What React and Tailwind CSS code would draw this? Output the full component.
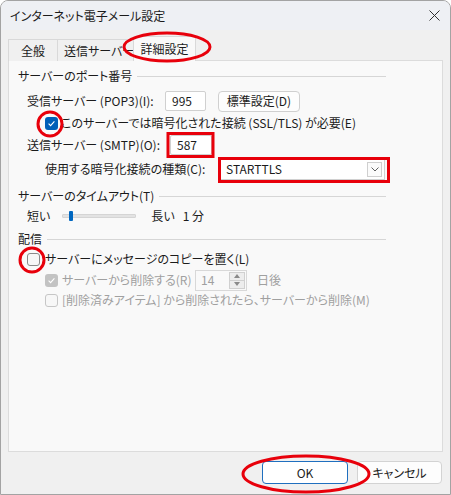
import React from "react";

function Check({ checked, disabled }) {
  if (checked) {
    return (
      <span
        className={`w-[13px] h-[13px] rounded-[3px] flex items-center justify-center shrink-0 ${
          disabled ? "bg-[#c3c3c3]" : "bg-[#005fb8]"
        }`}
      >
        <svg width="9" height="9" viewBox="0 0 9 9">
          <path d="M1.6 4.7 L3.6 6.6 L7.4 2.4" fill="none" stroke="white" strokeWidth="1.1" />
        </svg>
      </span>
    );
  }
  return (
    <span
      className={`w-[13px] h-[13px] rounded-[3px] border shrink-0 bg-[#f7f7f7] ${
        disabled ? "border-[#c6c6c6]" : "border-[#8a8a8a]"
      }`}
    />
  );
}

function Group({ title, className }) {
  return (
    <div className={`flex items-center h-[18px] ${className}`}>
      <span>{title}</span>
      <span className="flex-1 h-px bg-[#d6d6d6] ml-[5px]" />
    </div>
  );
}

export default function App() {
  return (
    <div className="relative w-[451px] h-[495px] bg-[#f0f0f0] border border-[#a3a3a3] rounded-t-[8px] overflow-hidden text-[12px] leading-[18px] text-[#1b1b1b] font-['Noto_Sans_CJK_JP','Noto_Sans',sans-serif] [font-feature-settings:'palt']">
      {/* title bar */}
      <div className="h-[29px] flex items-center justify-between pl-[9px] pr-[9px] bg-[#eef0f4]">
        <span>インターネット電子メール設定</span>
        <svg width="11" height="11" viewBox="0 0 11 11" className="mr-[1px]">
          <path d="M0.5 0.5 L10.5 10.5 M10.5 0.5 L0.5 10.5" stroke="#303030" strokeWidth="1" />
        </svg>
      </div>

      {/* tabs */}
      <div className="flex items-end h-[31px] pl-[7px] relative z-10 -mb-px whitespace-nowrap">
        <div className="w-[49px] h-[22px] flex items-center justify-center border-l border-t border-[#d9d9d9] bg-[#f0f0f0]">
          全般
        </div>
        <div className="w-[76px] h-[22px] flex items-center pl-[6px] border-l border-t border-[#d9d9d9] bg-[#f0f0f0] overflow-hidden">
          送信サーバー
        </div>
        <div className="w-[63px] h-[25px] flex items-center justify-center border-l border-t border-r border-[#d9d9d9] bg-[#f9f9f9] rounded-t-[2px]">
          詳細設定
        </div>
      </div>

      {/* panel */}
      <div className="mx-[7px] h-[392px] bg-[#f9f9f9] border border-[#dcdcdc] whitespace-nowrap">
        <div className="pl-[9px] w-[377px]">
          <Group title="サーバーのポート番号" className="mt-[6px]" />

          <div className="flex items-center h-[22px] mt-[5px] pl-[9px]">
            <span className="w-[138px]">受信サーバー (POP3)(I):</span>
            <div className="w-[41px] h-[20px] bg-white border border-[#d0d0d0] rounded-[2px] flex items-center pl-[6px]">
              995
            </div>
            <div className="ml-[12px] w-[82px] h-[21px] bg-[#fdfdfd] border border-[#d0d0d0] rounded-[4px] flex items-center justify-center">
              標準設定(D)
            </div>
          </div>

          <div className="flex items-center h-[18px] mt-[2px] pl-[27px] gap-[3px]">
            <Check checked />
            <span>このサーバーでは暗号化された接続 (SSL/TLS) が必要(E)</span>
          </div>

          <div className="flex items-center h-[22px] mt-[2px] pl-[9px]">
            <span className="w-[143px]">送信サーバー (SMTP)(O):</span>
            <div className="w-[42px] h-[20px] bg-white border border-[#d0d0d0] rounded-[2px] flex items-center pl-[6px]">
              587
            </div>
          </div>

          <div className="flex items-center h-[22px] mt-[2px] pl-[27px]">
            <span className="w-[175px]">使用する暗号化接続の種類(C):</span>
            <div className="w-[165px] h-[21px] bg-white border border-[#d0d0d0] flex items-center justify-between pl-[5px] pr-[2px]">
              <span>STARTTLS</span>
              <div className="w-[15px] h-[15px] border border-[#cfcfcf] bg-[#fbfbfb] flex items-center justify-center">
                <svg width="8" height="5" viewBox="0 0 8 5">
                  <path d="M0.5 0.5 L4 4 L7.5 0.5" fill="none" stroke="#606060" strokeWidth="1" />
                </svg>
              </div>
            </div>
          </div>

          <Group title="サーバーのタイムアウト(T)" className="mt-[7px]" />

          <div className="flex items-center h-[18px] mt-[2px] pl-[9px]">
            <span>短い</span>
            <div className="relative ml-[12px] w-[74px] h-[4px] bg-[#e3e3e3] border border-[#d5d5d5] rounded-[1px]">
              <span className="absolute left-[6px] -top-[4px] w-[4px] h-[10px] rounded-[1px] bg-[#0067c0]" />
            </div>
            <span className="ml-[15px]">長い</span>
            <span className="ml-[8px]">1 分</span>
          </div>

          <Group title="配信" className="mt-[5px]" />

          <div className="flex items-center h-[18px] mt-[2px] pl-[9px] gap-[5px]">
            <Check />
            <span>サーバーにメッセージのコピーを置く(L)</span>
          </div>

          <div className="flex items-center h-[22px] mt-px pl-[27px] text-[#a0a0a0]">
            <Check checked disabled />
            <span className="ml-[4px] w-[133px]">サーバーから削除する(R)</span>
            <div className="w-[52px] h-[21px] border border-[#d8d8d8] bg-[#f9f9f9] flex items-center justify-between pl-[5px] pr-[1px]">
              <span>14</span>
              <div className="w-[16px] h-[17px] flex flex-col border border-[#d0d0d0] bg-[#ededed]">
                <div className="flex-1 flex items-center justify-center border-b border-[#d0d0d0]">
                  <svg width="6" height="4" viewBox="0 0 6 4">
                    <path d="M0 4 L3 0 L6 4 Z" fill="#8a8a8a" />
                  </svg>
                </div>
                <div className="flex-1 flex items-center justify-center">
                  <svg width="6" height="4" viewBox="0 0 6 4">
                    <path d="M0 0 L3 4 L6 0 Z" fill="#8a8a8a" />
                  </svg>
                </div>
              </div>
            </div>
            <span className="ml-[10px]">日後</span>
          </div>

          <div className="flex items-center h-[18px] pl-[27px] gap-[4px] text-[#a0a0a0]">
            <Check disabled />
            <span>[削除済みアイテム] から削除されたら、サーバーから削除(M)</span>
          </div>
        </div>
      </div>

      {/* buttons */}
      <div className="flex justify-end gap-[9px] pr-[8px] mt-[9px]">
        <div className="w-[86px] h-[23px] bg-white border border-[#1f6fbf] rounded-[4px] flex items-center justify-center">
          OK
        </div>
        <div className="w-[85px] h-[23px] bg-[#fdfdfd] border border-[#d3d3d3] rounded-[4px] flex items-center justify-center">
          キャンセル
        </div>
      </div>

      {/* red annotations */}
      <svg className="absolute left-[-1px] top-[-1px] pointer-events-none z-20" width="451" height="495">
        <ellipse cx="167" cy="47" rx="43" ry="14" fill="none" stroke="#e8000b" strokeWidth="3" />
        <circle cx="50" cy="124" r="12" fill="none" stroke="#e8000b" strokeWidth="3" />
        <rect x="168" y="133.5" width="45" height="23" fill="none" stroke="#e8000b" strokeWidth="3" />
        <rect x="219.5" y="158.5" width="169" height="23" fill="none" stroke="#e8000b" strokeWidth="3" />
        <circle cx="32" cy="260" r="12" fill="none" stroke="#e8000b" strokeWidth="3" />
        <ellipse cx="306" cy="474" rx="63" ry="18" fill="none" stroke="#e8000b" strokeWidth="3" />
      </svg>
    </div>
  );
}
